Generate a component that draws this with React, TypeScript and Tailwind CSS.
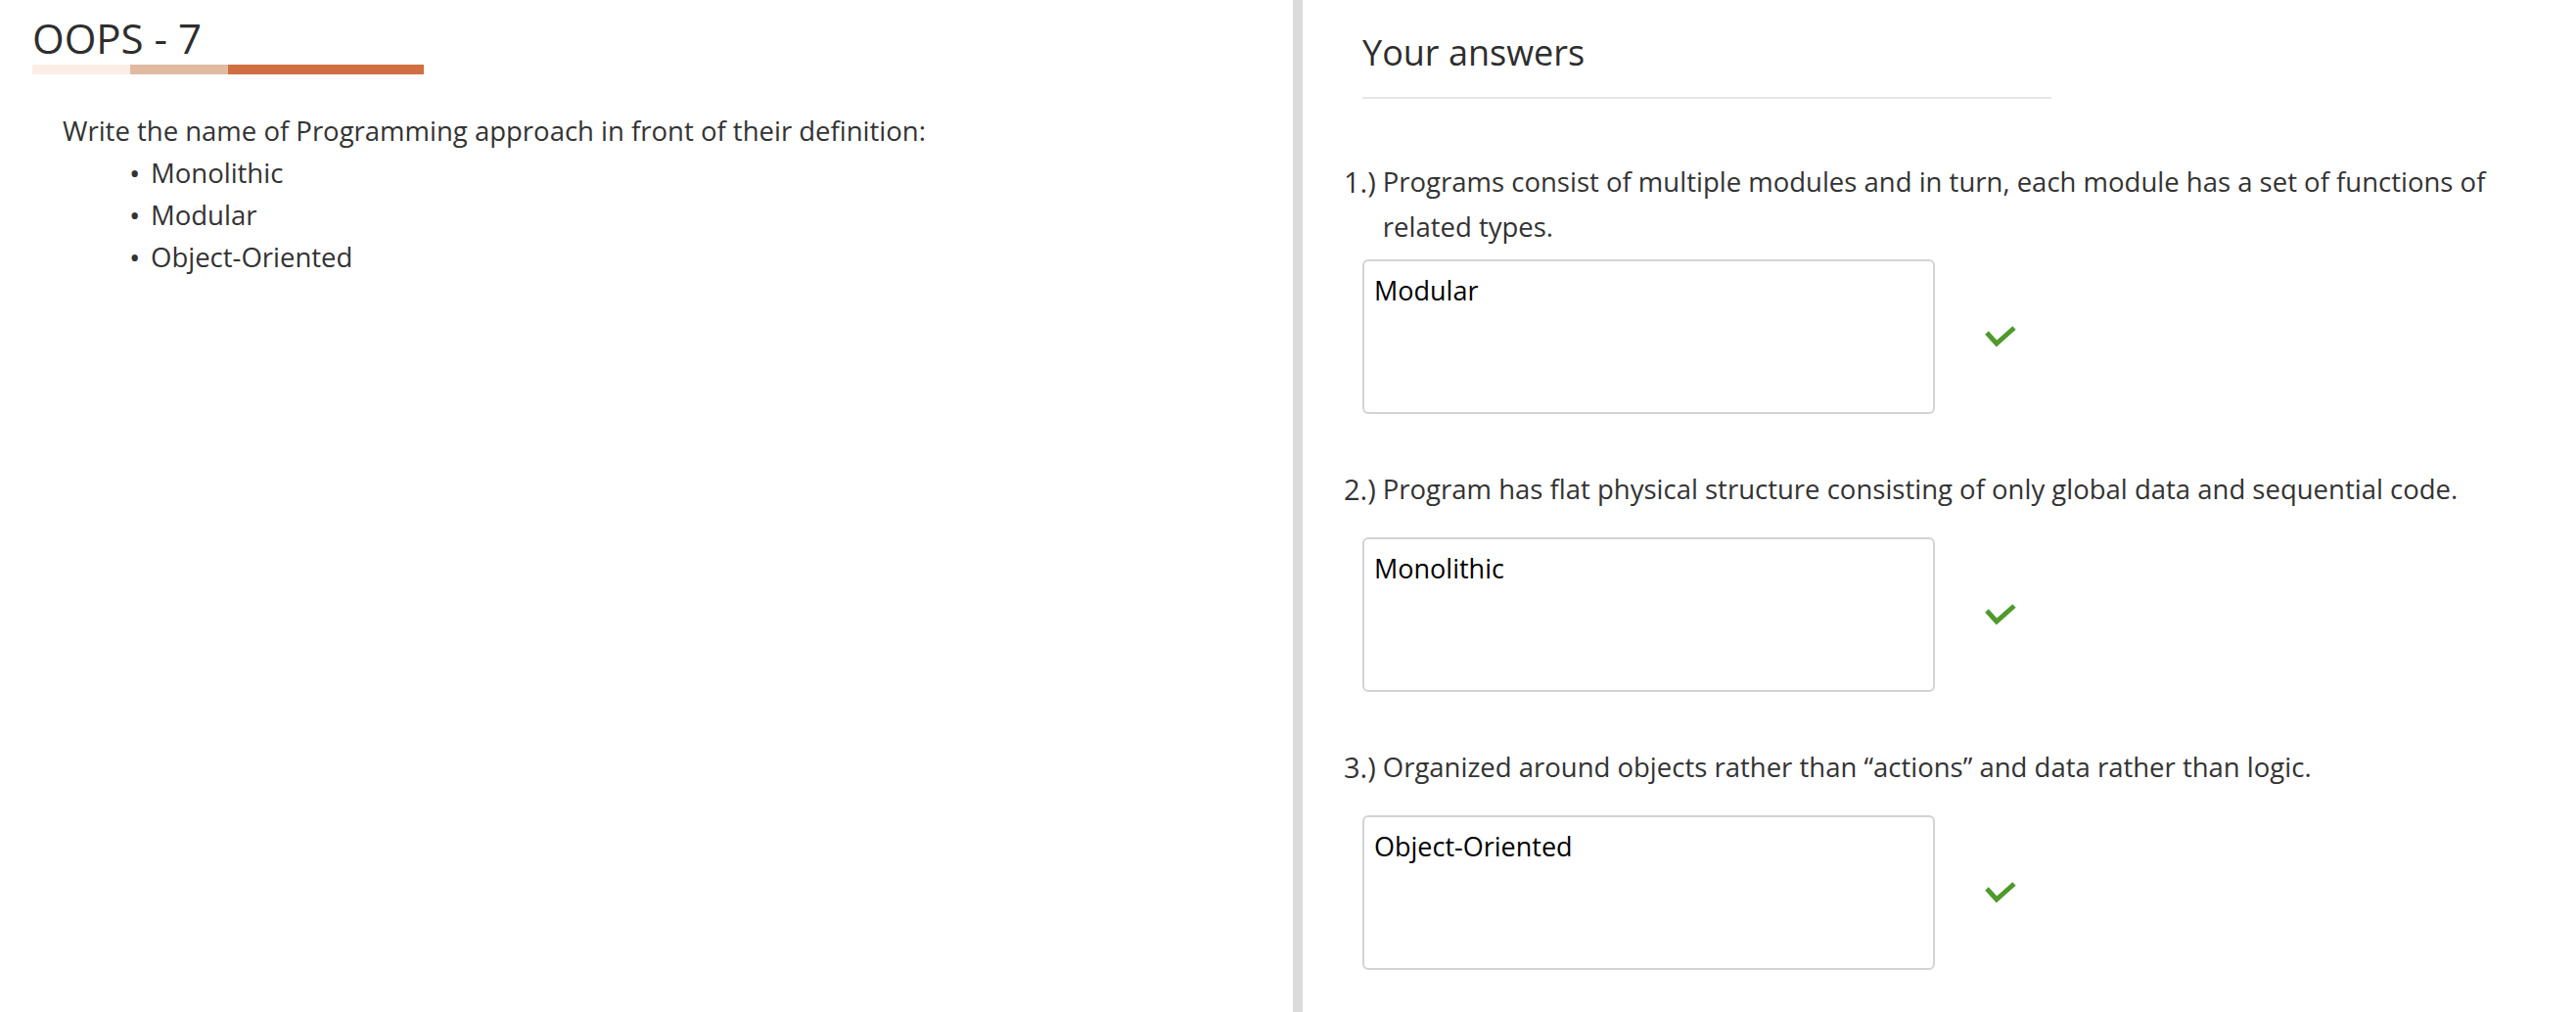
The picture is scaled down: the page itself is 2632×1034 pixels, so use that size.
import React from "react";

const font = { fontFamily: '"Open Sans", "Noto Sans", sans-serif' };

function Check() {
  return (
    <svg width="32" height="24" viewBox="0 0 32 24" className="shrink-0">
      <polyline points="2,8 12,19 30,3" fill="none" stroke="#4f9a2d" strokeWidth="5" />
    </svg>
  );
}

type Q = { n: string; text: string; answer: string; gap: string };

const questions: Q[] = [
  {
    n: "1.)",
    text: "Programs consist of multiple modules and in turn, each module has a set of functions of related types.",
    answer: "Modular",
    gap: "mt-[10px]",
  },
  {
    n: "2.)",
    text: "Program has flat physical structure consisting of only global data and sequential code.",
    answer: "Monolithic",
    gap: "mt-[26px]",
  },
  {
    n: "3.)",
    text: "Organized around objects rather than \u201cactions\u201d and data rather than logic.",
    answer: "Object-Oriented",
    gap: "mt-[26px]",
  },
];

export default function App() {
  return (
    <div className="flex h-[1034px] w-full overflow-hidden bg-white" style={font}>
      <div className="w-[1321px] shrink-0 pl-[33px] pt-[15px]">
        <h1 className="text-[42px] leading-[48px] text-[#2e2e2e]">OOPS - 7</h1>
        <div className="mt-[3px] flex h-[10px] w-[400px]">
          <div className="w-[100px] bg-[#fbeee6]" />
          <div className="w-[100px] bg-[#e0bba2]" />
          <div className="w-[200px] bg-[#d06f42]" />
        </div>
        <div className="mt-[36px] pl-[31px] text-[27.5px] leading-[43px] text-[#333333]">
          <p>Write the name of Programming approach in front of their definition:</p>
          <ul className="pl-[68px]">
            {["Monolithic", "Modular", "Object-Oriented"].map((t) => (
              <li key={t} className="flex">
                <span className="w-[22px] text-[30px]">•</span>
                <span>{t}</span>
              </li>
            ))}
          </ul>
        </div>
      </div>
      <div className="w-[10px] shrink-0 bg-[#dcdcdc]" />
      <div className="flex-1 pl-[61px] pr-[61px] pt-[32px]">
        <h2 className="text-[36px] leading-[44px] text-[#2e2e2e]">Your answers</h2>
        <div className="mt-[23px] h-[2px] w-[704px] bg-[#e6e6e6]" />
        <div className="mt-[62px]">
          {questions.map((q, i) => (
            <div key={q.n} className={i === 0 ? "" : "mt-[54px]"}>
              <div className="-ml-[19px] flex gap-[7px] text-[#333333]">
                <span className="text-[29px] leading-[46px]">{q.n}</span>
                <p className="text-[27.5px] leading-[46px]">{q.text}</p>
              </div>
              <div className={`${q.gap} flex items-center`}>
                <textarea
                  readOnly
                  defaultValue={q.answer}
                  className="h-[158px] w-[585px] resize-none rounded-[6px] border-2 border-[#d3d3d3] bg-white px-[10px] py-[8px] text-[27px] leading-[43px] text-black outline-none"
                  style={font}
                />
                <div className="ml-[51px]">
                  <Check />
                </div>
              </div>
            </div>
          ))}
        </div>
      </div>
    </div>
  );
}
